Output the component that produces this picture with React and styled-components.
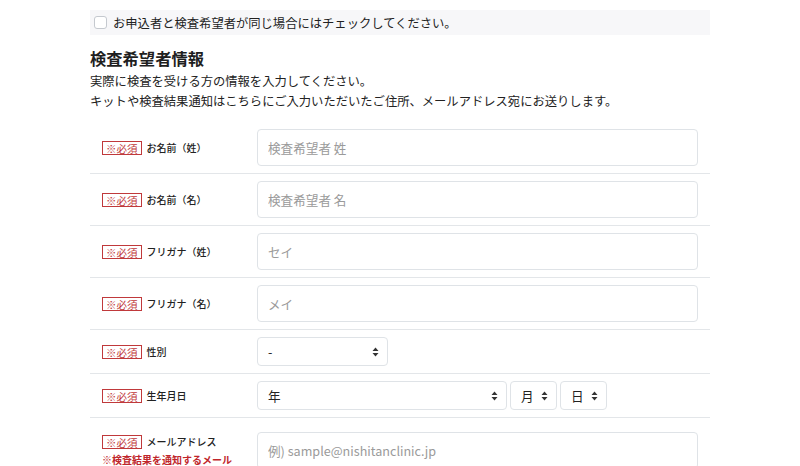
import React from "react";
import styled, { createGlobalStyle } from "styled-components";

const GlobalStyle = createGlobalStyle`
  body {
    margin: 0;
    background: #fff;
    font-family: "Noto Sans CJK JP", "Noto Sans", sans-serif;
    color: #212529;
  }
`;

const Page = styled.div`
  width: 620px;
  margin: 0 auto;
  padding-top: 10px;
`;

const SameBar = styled.label`
  display: flex;
  align-items: center;
  gap: 6px;
  height: 25px;
  padding: 0 4px;
  background: #f7f7f9;
  font-size: 12.3px;
  color: #222;
`;

const Check = styled.span`
  width: 13px;
  height: 13px;
  border: 1px solid #c5c9cf;
  border-radius: 3px;
  background: #fff;
  box-sizing: border-box;
`;

const Heading = styled.h2`
  margin: 11px 0 1px;
  font-size: 16.3px;
  font-weight: 700;
  line-height: 24px;
  color: #1f1f1f;
`;

const Lead = styled.p`
  margin: 0 0 11px;
  font-size: 12.3px;
  line-height: 20px;
  color: #222;
`;

const Row = styled.div`
  display: flex;
  align-items: center;
  padding: ${({ $top }) => $top || 7}px 12px 7px;
  border-bottom: 1.5px solid #e3e6e9;
`;

const LabelCell = styled.div`
  width: 155px;
  flex-shrink: 0;
  display: flex;
  flex-direction: column;
  gap: 3px;
`;

const LabelLine = styled.div`
  display: flex;
  align-items: center;
  gap: 5px;
  font-size: 10px;
  font-weight: 500;
  color: #222;
`;

const Required = styled.span`
  display: inline-block;
  padding: 0 3px;
  height: 14px;
  line-height: 13px;
  border: 1px solid #c0393b;
  color: #c0393b;
  font-size: 10.5px;
  font-weight: 400;
  box-sizing: border-box;
`;

const Note = styled.div`
  font-size: 10px;
  font-weight: 700;
  color: #c0262b;
  white-space: nowrap;
`;

const Input = styled.input`
  flex: 1;
  height: 37px;
  box-sizing: border-box;
  border: 1px solid #dfe3e7;
  border-radius: 4px;
  padding: 0 10px;
  font-family: inherit;
  font-size: 12.6px;
  color: #222;
  outline: none;
  &::placeholder {
    color: #9a9a9a;
  }
`;

const Selects = styled.div`
  display: flex;
  gap: 3px;
`;

const Select = styled.div`
  width: ${({ $w }) => $w}px;
  height: 29px;
  box-sizing: border-box;
  border: 1px solid #dfe3e7;
  border-radius: 4px;
  padding: 0 8px 0 10px;
  display: flex;
  align-items: center;
  justify-content: space-between;
  font-size: 12.6px;
  color: #222;
`;

const Arrows = () => (
  <svg width="7" height="10" viewBox="0 0 7 10">
    <path d="M3.5 0.5 L6.5 4 H0.5 Z M3.5 9.5 L0.5 6 H6.5 Z" fill="#333" />
  </svg>
);

const Field = ({ label, note, children, top }) => (
  <Row $top={top}>
    <LabelCell>
      <LabelLine>
        <Required>※必須</Required>
        {label}
      </LabelLine>
      {note && <Note>{note}</Note>}
    </LabelCell>
    {children}
  </Row>
);

export default function App() {
  return (
    <>
      <GlobalStyle />
      <Page>
        <SameBar>
          <Check />
          お申込者と検査希望者が同じ場合にはチェックしてください。
        </SameBar>
        <Heading>検査希望者情報</Heading>
        <Lead>
          実際に検査を受ける方の情報を入力してください。
          <br />
          キットや検査結果通知はこちらにご入力いただいたご住所、メールアドレス宛にお送りします。
        </Lead>
        <Field label="お名前（姓）">
          <Input placeholder="検査希望者 姓" />
        </Field>
        <Field label="お名前（名）">
          <Input placeholder="検査希望者 名" />
        </Field>
        <Field label="フリガナ（姓）">
          <Input placeholder="セイ" />
        </Field>
        <Field label="フリガナ（名）">
          <Input placeholder="メイ" />
        </Field>
        <Field label="性別">
          <Select $w={131}>
            -<Arrows />
          </Select>
        </Field>
        <Field label="生年月日">
          <Selects>
            <Select $w={250}>
              年<Arrows />
            </Select>
            <Select $w={47}>
              月<Arrows />
            </Select>
            <Select $w={47}>
              日<Arrows />
            </Select>
          </Selects>
        </Field>
        <Field label="メールアドレス" note="※検査結果を通知するメール" top={14}>
          <Input placeholder="例) sample@nishitanclinic.jp" />
        </Field>
      </Page>
    </>
  );
}
